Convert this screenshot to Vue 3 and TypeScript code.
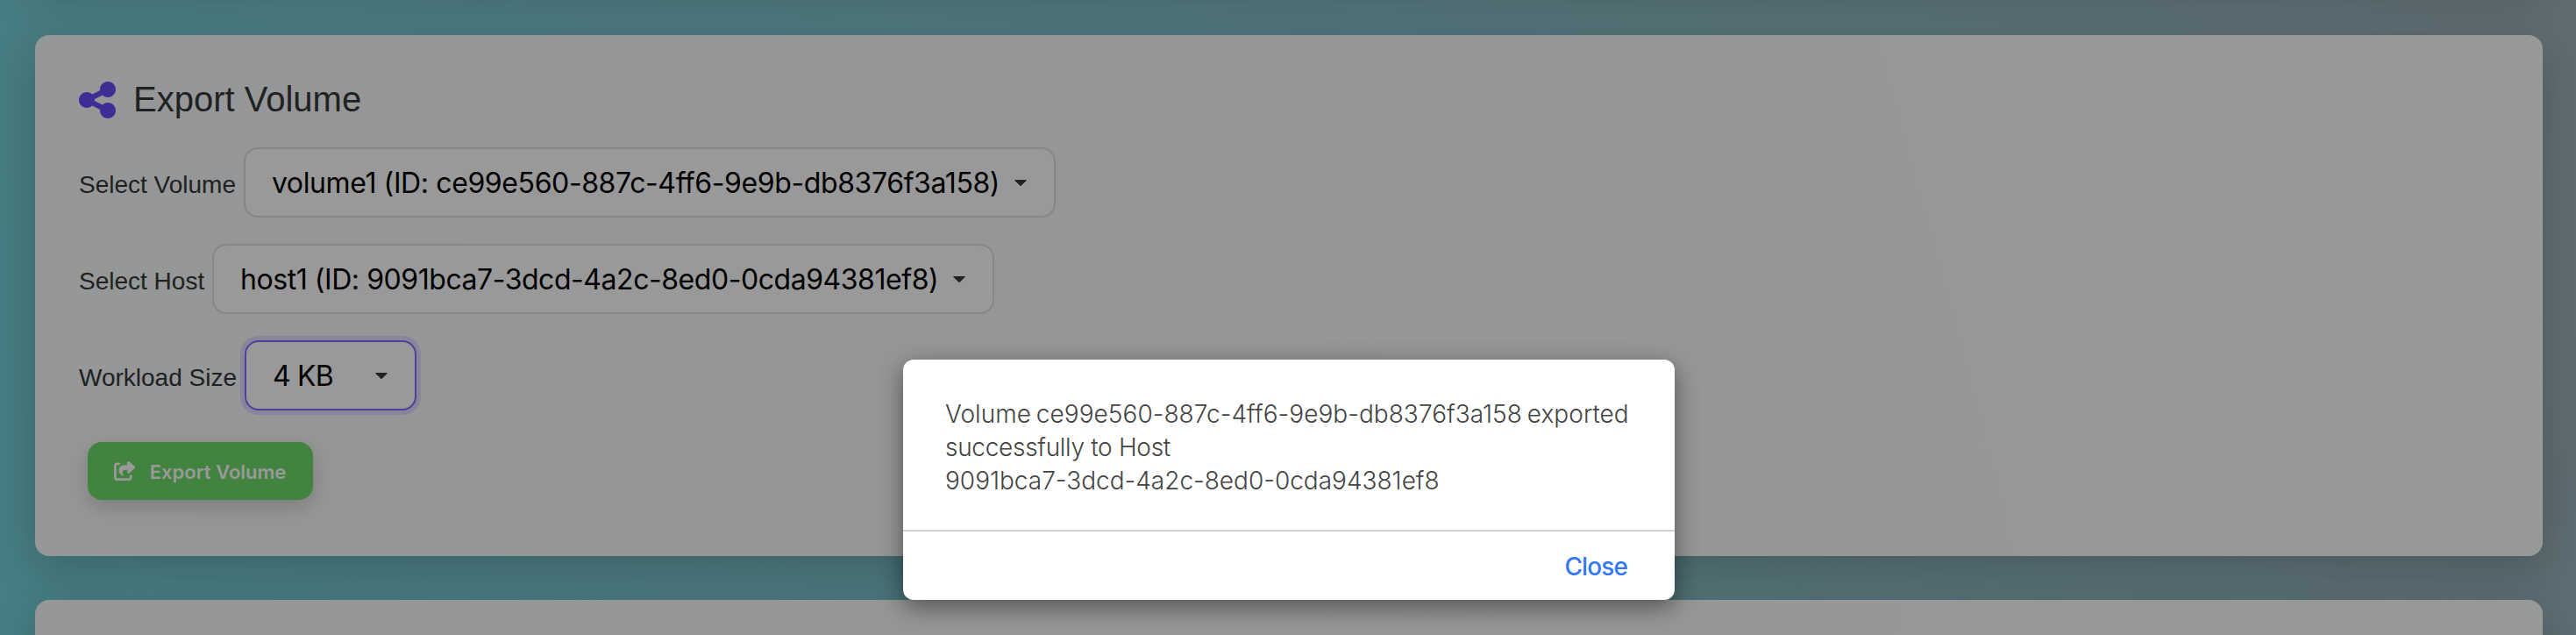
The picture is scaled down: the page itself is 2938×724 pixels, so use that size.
<script setup lang="ts">
interface Field {
  key: string
  label: string
  value: string
  focused?: boolean
}

const fields: Field[] = [
  { key: 'volume', label: 'Select Volume', value: 'volume1 (ID: ce99e560-887c-4ff6-9e9b-db8376f3a158)' },
  { key: 'host', label: 'Select Host', value: 'host1 (ID: 9091bca7-3dcd-4a2c-8ed0-0cda94381ef8)' },
  { key: 'workload', label: 'Workload Size', value: '4 KB', focused: true },
]

const message: { key: string; text: string }[] = [
  { key: 'first', text: 'Volume ce99e560-887c-4ff6-9e9b-db8376f3a158 exported' },
  { key: 'second', text: 'successfully to Host' },
  { key: 'third', text: '9091bca7-3dcd-4a2c-8ed0-0cda94381ef8' },
]
</script>

<template>
  <main class="page">
    <section class="card card-prev"></section>

    <section class="card card-main">
      <h2 class="title">
        <svg class="share" viewBox="0 0 448 512" aria-hidden="true">
          <path d="M352 224c53 0 96-43 96-96s-43-96-96-96s-96 43-96 96c0 4 .2 8 .7 11.9l-94.1 47C145.4 170.2 121.9 160 96 160c-53 0-96 43-96 96s43 96 96 96c25.9 0 49.4-10.2 66.6-26.9l94.1 47c-.5 3.9-.7 7.8-.7 11.9c0 53 43 96 96 96s96-43 96-96s-43-96-96-96c-25.9 0-49.4 10.2-66.6 26.9l-94.1-47c.5-3.9 .7-7.8 .7-11.9s-.2-8-.7-11.9l94.1-47C302.6 213.8 326.1 224 352 224z" />
        </svg>
        <span class="title-text">Export Volume</span>
      </h2>

      <div class="fields">
        <div v-for="f in fields" :key="f.key" class="field">
          <span class="label">{{ f.label }}</span>
          <div class="select" :class="[f.key, { focused: f.focused }]" role="combobox" tabindex="0">
            <span class="value">{{ f.value }}</span>
            <svg class="caret" viewBox="0 0 14 7" aria-hidden="true">
              <path d="M.6 0h12.8c.5 0 .7.5.3.8L7.6 6.7a.9.9 0 0 1-1.2 0L.3.8C-.1.5.1 0 .6 0z" />
            </svg>
          </div>
        </div>
      </div>

      <button class="export" type="button">
        <svg class="export-icon" viewBox="0 0 576 512" aria-hidden="true">
          <path d="M352 224H305.500c-45 0-81.500 36.500-81.500 81.500c0 22.300 10.300 34.300 19.200 40.500c6.800 4.700 12.800 12 12.800 20.300c0 9.800-8 17.800-17.800 17.800h-2.500c-2.400 0-4.800-.4-7.100-1.400C210.800 374.800 128 333.400 128 240c0-79.500 64.500-144 144-144h80V34.700C352 15.500 367.500 0 386.700 0c8.600 0 16.800 3.200 23.200 8.900L548.100 133.300c7.600 6.800 11.900 16.500 11.900 26.700s-4.300 19.900-11.900 26.700l-139 125.100c-5.900 5.300-13.500 8.200-21.400 8.200H384c-17.700 0-32-14.300-32-32V224zM80 96c-8.800 0-16 7.200-16 16V432c0 8.800 7.200 16 16 16H400c8.800 0 16-7.200 16-16V384c0-17.700 14.300-32 32-32s32 14.300 32 32v48c0 44.200-35.800 80-80 80H80c-44.200 0-80-35.800-80-80V112C0 67.800 35.800 32 80 32h48c17.700 0 32 14.300 32 32s-14.300 32-32 32H80z" />
        </svg>
        <span class="export-text">Export Volume</span>
      </button>
    </section>

    <section class="card card-next"></section>

    <div class="dialog" role="alertdialog">
      <div class="dialog-body">
        <div v-for="m in message" :key="m.key" class="line" :class="m.key">{{ m.text }}</div>
      </div>
      <div class="dialog-footer">
        <button class="close" type="button">Close</button>
      </div>
    </div>
  </main>
</template>

<style>
body {
  overflow: hidden;
}
</style>

<style scoped>
.page {
  position: relative;
  box-sizing: border-box;
  width: 2938px;
  height: 724px;
  padding: 0 38px 0 40px;
  overflow: hidden;
  background: linear-gradient(75deg, #467d83 0%, #50757a 50%, #5f6b71 100%);
  font-family: "Liberation Sans", Arial, sans-serif;
  color: #202121;
}

.card {
  box-sizing: border-box;
  border-radius: 16px;
  background: linear-gradient(75deg, #959798 0%, #959796 50%, #979997 100%);
  box-shadow: 0 16px 48px rgba(0, 0, 0, 0.18);
}

.card-prev {
  height: 60px;
  margin-top: -82px;
}

.card-main {
  height: 594px;
  margin-top: 62px;
  padding: 50px;
}

.card-next {
  height: 300px;
  margin-top: 50px;
}

.title {
  display: flex;
  align-items: center;
  gap: 20px;
  height: 48px;
  margin: 0 0 30px;
  font-size: 40px;
  font-weight: 400;
  line-height: 46px;
}

.title-text {
  padding-bottom: 2px;
}

.share {
  width: 42px;
  height: 48px;
  fill: #3f2d96;
}

.fields {
  display: flex;
  flex-direction: column;
  gap: 30px;
}

.field {
  display: flex;
  align-items: baseline;
  gap: 8.9px;
  height: 80px;
}

.label {
  font-size: 28px;
  line-height: 32px;
}

.select {
  box-sizing: border-box;
  display: flex;
  align-items: center;
  justify-content: space-between;
  height: 80px;
  padding: 0 31px 0 30px;
  border: 2px solid #868686;
  border-radius: 16px;
  background: #999;
  color: #000;
  font-family: Inter, sans-serif;
  font-size: 32px;
  line-height: 40px;
  white-space: nowrap;
}

.value {
  padding-top: 2px;
}

.select.volume {
  width: 926px;
  letter-spacing: -0.39px;
}

.select.host {
  width: 892px;
  letter-spacing: -0.45px;
}

.select.workload {
  width: 196px;
  letter-spacing: -0.8px;
}

.select.focused {
  border-color: #4d3f9a;
  box-shadow: 0 0 0 5px #88859b;
}

.caret {
  flex: none;
  width: 14px;
  height: 7px;
  fill: #202121;
}

.export {
  display: flex;
  align-items: center;
  gap: 16px;
  box-sizing: border-box;
  width: 257px;
  height: 66px;
  margin: 36px 0 0 10px;
  padding: 0 30px;
  border: 0;
  border-radius: 16px;
  background: #42833f;
  box-shadow: 0 8px 24px rgba(0, 0, 0, 0.18);
  color: #999;
  font-family: Inter, sans-serif;
  font-size: 22px;
  font-weight: 600;
  line-height: 28px;
  white-space: nowrap;
}

.export-icon {
  flex: none;
  width: 24.75px;
  height: 22px;
  fill: #999;
}

.export-text {
  padding-top: 2px;
}

.dialog {
  position: absolute;
  top: 410px;
  left: 1030px;
  width: 880px;
  height: 274px;
  border-radius: 12px;
  background: #fff;
  box-shadow: 0 8px 28px rgba(0, 0, 0, 0.46);
  font-family: Inter, sans-serif;
  font-size: 28px;
}

.dialog-body {
  box-sizing: border-box;
  height: 196px;
  padding: 43px 48px 0;
  border-bottom: 2px solid #d3d3d3;
  color: #444;
  font-weight: 300;
  line-height: 38px;
  white-space: nowrap;
}

.line.first {
  letter-spacing: 0.04px;
  word-spacing: -2px;
}

.line.second {
  letter-spacing: -0.3px;
}

.dialog-footer {
  display: flex;
  align-items: center;
  justify-content: flex-end;
  height: 78px;
  padding-right: 54px;
}

.close {
  padding: 2px 0 0;
  border: 0;
  background: none;
  color: #3478f6;
  font: 500 28px/38px Inter, sans-serif;
  letter-spacing: -0.9px;
}
</style>
